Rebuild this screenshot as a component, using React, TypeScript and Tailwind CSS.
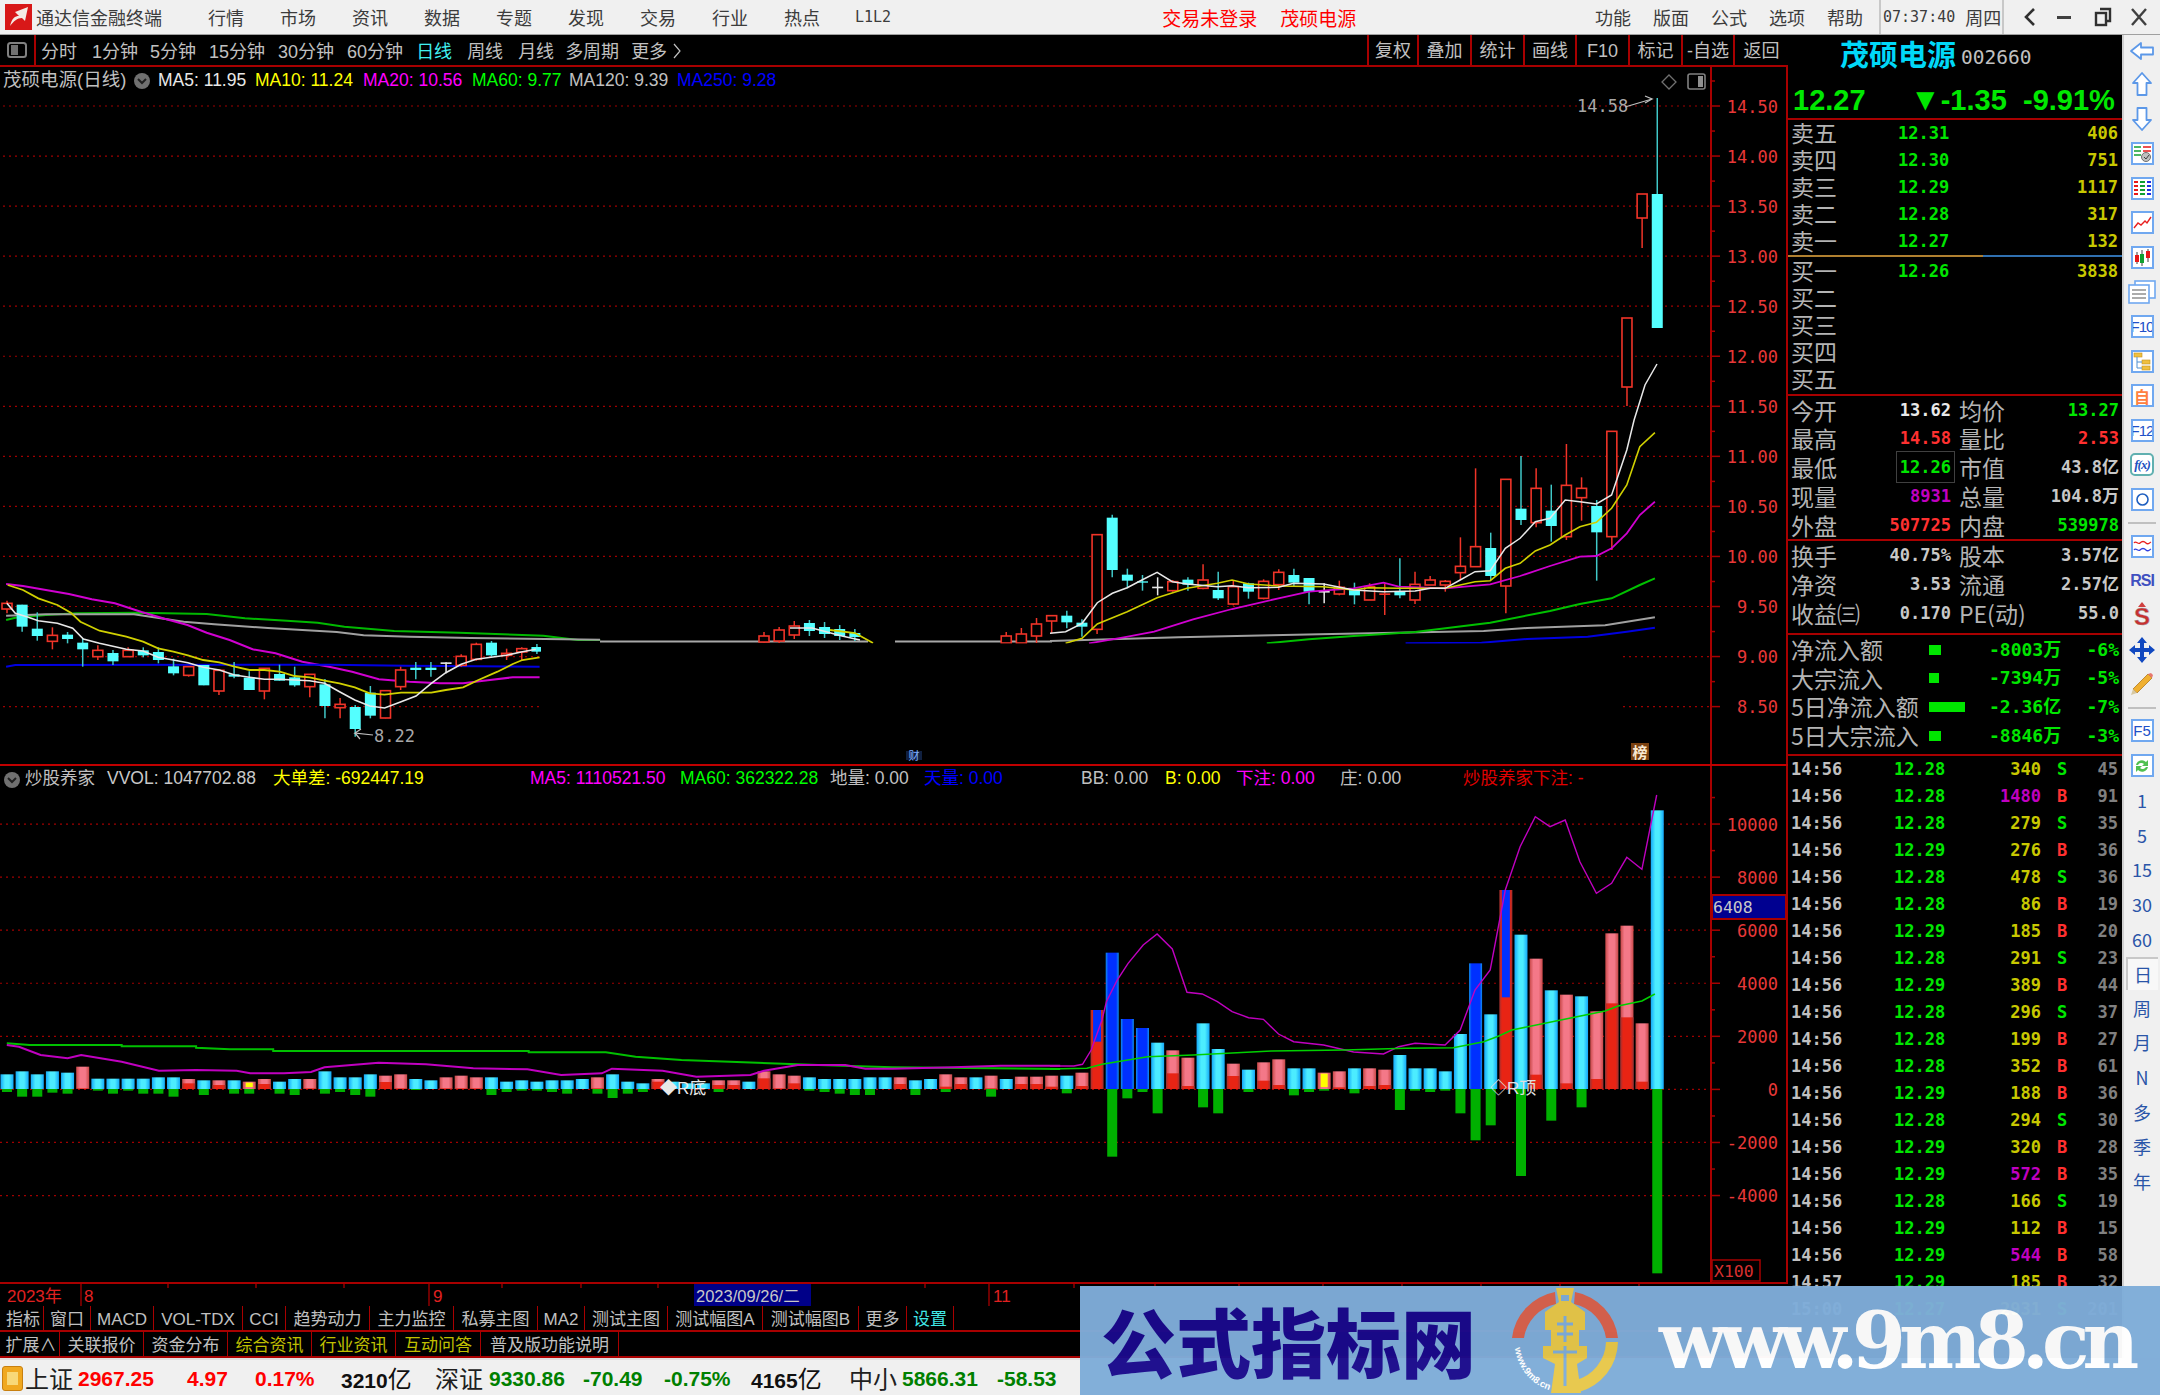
import React from "react";

type P = [number, number];
const SANS = "font-['Liberation_Sans','Noto_Sans_CJK_SC',sans-serif]";
const MONO = "font-['DejaVu_Sans_Mono','Noto_Sans_CJK_SC',monospace]";
const CJK = "font-['Noto_Sans_CJK_SC','Liberation_Sans',sans-serif]";
const FM = "'DejaVu Sans Mono','Noto Sans CJK SC',monospace";
const FS = "'Liberation Sans','Noto Sans CJK SC',sans-serif";

const ix = (i: number) => 7 + 15.14 * i;
const a = (pts: P[]) => pts.map(([x, y]) => `${(x / 2.613).toFixed(1)},${(570 + y / 3).toFixed(1)}`).join(" ");
const c = (pts: P[]) => pts.map(([x, y]) => `${(1050 + x / 2.306).toFixed(1)},${(420 + y / 3).toFixed(1)}`).join(" ");
const vl = (pts: P[]) => pts.map(([x, y]) => `${(x / 1.479).toFixed(1)},${(760 + y / 3).toFixed(1)}`).join(" ");
const vr = (pts: P[]) => pts.map(([x, y]) => `${(1050 + x / 2.306).toFixed(1)},${(780 + y / 3).toFixed(1)}`).join(" ");

type Cd = [number, number, number, number, number, string];
const ZA = (y: number) => 570 + y / 3;
const ZC = (y: number) => 420 + y / 3;
const candA: Cd[] = [
  [0,100,117,92,130,"r"],[1,104,170,104,185,"c"],[2,176,198,127,212,"c"],[3,196,214,172,238,"r"],[4,194,207,186,220,"c"],[5,218,238,205,290,"c"],[6,241,260,226,270,"r"],[7,249,274,240,285,"c"],[8,241,260,232,260,"r"],[9,241,256,232,262,"c"],[10,246,270,232,280,"c"],[11,289,310,266,316,"c"],[12,290,316,290,320,"r"],[13,285,346,285,346,"c"],[14,301,363,301,375,"r"],[15,313,320,276,325,"c"],[16,323,360,304,360,"c"],[17,295,363,295,388,"r"],[18,312,332,284,332,"c"],[19,322,346,290,350,"c"],[20,313,350,313,382,"r"],[21,343,408,327,445,"c"],[22,403,413,384,445,"r"],[23,411,477,405,500,"c"],[24,368,437,348,445,"c"],[25,362,444,362,445,"r"],[26,300,350,290,360,"r"],[27,293,300,276,328,"c"],[28,293,300,276,320,"c"],[29,277,279,277,310,"w"],[30,259,286,253,290,"r"],[31,223,268,218,272,"r"],[32,218,256,213,260,"c"],[33,250,256,236,270,"r"],[34,236,246,232,270,"r"],[35,231,245,222,252,"c"],
];
const candB: Cd[] = [
  [50,636,642,632,643,"r"],[51,630,641,627,643,"r"],[52,626,635,621,639,"r"],[53,623,631,620,636,"c"],[54,627,634,622,638,"c"],[55,629,636,625,640,"c"],[56,633,637,629,641,"c"],
  [66,636,643,632,643,"r"],[67,634,643,628,643,"r"],[68,624,636,618,643,"r"],
];
const candC: Cd[] = [
  [69,587,603,587,640,"r"],[70,587,607,572,625,"c"],[71,608,620,598,650,"c"],[72,344,628,344,642,"r"],[73,293,450,284,472,"c"],[74,464,482,446,505,"c"],[75,484,488,465,512,"c"],[76,500,502,472,526,"w"],[77,485,512,480,515,"r"],[78,479,494,472,512,"c"],[79,480,505,433,508,"r"],[80,510,535,455,540,"c"],[81,500,552,480,556,"r"],[82,490,515,488,536,"c"],[83,484,535,478,538,"r"],[84,457,494,448,510,"r"],[85,465,488,446,498,"c"],[86,474,515,474,553,"c"],[87,513,517,490,550,"w"],[88,502,522,482,526,"r"],[89,508,526,488,553,"c"],[90,500,540,490,540,"r"],[91,520,525,490,585,"s"],[92,515,526,415,535,"c"],[93,493,540,455,552,"r"],[94,480,495,468,495,"r"],[95,484,495,480,515,"r"],[96,439,458,352,480,"r"],[97,380,440,145,440,"r"],[98,384,468,338,480,"c"],[99,178,498,178,580,"r"],[100,266,300,108,315,"c"],[101,205,308,145,322,"r"],[102,272,318,194,365,"c"],[103,196,350,72,360,"r"],[104,205,233,172,302,"r"],[105,258,337,240,482,"c"],[106,34,350,34,390,"r"],
];
const candF: Cd[] = [
  [107,318,387,318,406,"r"],[108,194,218,194,248,"r"],[109,194,328,98,328,"c"],
];
const Candle = ({ d, f }: { d: Cd; f: (y: number) => number }) => {
  const [i, t, b, wt, wb, k] = d;
  const x = ix(i);
  const y1 = f(t), y2 = f(b), w1 = f(wt), w2 = f(wb);
  const col = k === "r" || k === "s" ? "#f03428" : k === "c" ? "#40c8c8" : "#e8e8e8";
  return (
    <g>
      <line x1={x} x2={x} y1={w1} y2={w2} stroke={col} strokeWidth={1.5} />
      {k === "r" && <rect x={x - 5} y={y1} width={10} height={y2 - y1} fill="#000" stroke="#f03428" strokeWidth={1.6} />}
      {k === "c" && <rect x={x - 5.5} y={y1} width={11} height={y2 - y1} fill="#54ffff" />}
      {k === "s" && <rect x={x - 5.5} y={y1} width={11} height={y2 - y1} fill="#f03428" />}
      {k === "w" && <rect x={x - 5.5} y={y1} width={11} height={1.6} fill="#e8e8e8" />}
    </g>
  );
};

const MainChart = () => {
  const levels = [14.5, 14, 13.5, 13, 12.5, 12, 11.5, 11, 10.5, 10, 9.5, 9, 8.5];
  const yp = (p: number) => 106 + (14.5 - p) * 100.1;
  return (
    <svg width={1788} height={697} viewBox="0 67 1788 697" className="block">
      {levels.map((p) => (
        <line key={p} x1={3} x2={1711} y1={yp(p)} y2={yp(p)} stroke="#a00000" strokeWidth={1.2} strokeDasharray="2 4" />
      ))}
      <polyline fill="none" stroke="#00b800" strokeWidth={2} points={a([[16,150],[40,143],[120,135],[200,130],[360,128],[540,132],[640,145],[750,152],[830,158],[900,170],[1030,183],[1200,188],[1420,197],[1510,210],[1568,210]])} />
      <polyline fill="none" stroke="#a0a0a0" strokeWidth={2} points={a([[16,137],[120,133],[350,133],[480,155],[560,163],[700,174],[790,180],[880,186],[950,196],[1070,200],[1230,204],[1568,209]])} />
      <polyline fill="none" stroke="#d000d0" strokeWidth={2} points={a([[16,42],[60,48],[120,60],[180,72],[240,88],[300,100],[370,126],[430,146],[490,165],[540,188],[600,210],[660,238],[720,250],[790,275],[860,290],[920,305],[990,328],[1070,335],[1150,340],[1210,340],[1280,330],[1340,322],[1410,322]])} />
      <polyline fill="none" stroke="#0000e0" strokeWidth={2} points={a([[16,290],[40,285],[860,284],[1060,287],[1410,290]])} />
      {candA.map((d) => <Candle key={d[0]} d={d} f={ZA} />)}
      <polyline fill="none" stroke="#d0d000" strokeWidth={1.8} points={a([[20,45],[60,60],[100,85],[150,105],[185,128],[210,155],[260,182],[330,200],[374,215],[413,235],[453,245],[491,256],[531,270],[573,277],[613,290],[652,300],[691,300],[731,305],[770,318],[809,322],[848,332],[887,340],[927,352],[966,370],[1005,374],[1048,368],[1127,368],[1165,360],[1210,352],[1250,330],[1300,305],[1340,282],[1365,270],[1410,262]])} />
      <polyline fill="none" stroke="#e8e8e8" strokeWidth={1.6} points={a([[18,100],[40,130],[70,140],[100,152],[150,160],[190,175],[218,207],[260,220],[330,238],[374,243],[413,262],[453,270],[491,278],[531,292],[573,300],[613,315],[652,322],[691,328],[731,328],[770,330],[809,332],[848,340],[887,365],[927,390],[966,408],[1005,414],[1048,395],[1087,378],[1127,340],[1165,308],[1205,283],[1244,268],[1283,262],[1323,256],[1362,246],[1400,238]])} />
      <line x1={600} x2={868} y1={641.5} y2={641.5} stroke="#a8a8a8" strokeWidth={2} />
      <line x1={895} x2={1052} y1={641.5} y2={641.5} stroke="#a8a8a8" strokeWidth={2} />
      {candB.map((d) => <Candle key={d[0]} d={d} f={(y) => y} />)}
      <polyline fill="none" stroke="#e8e8e8" strokeWidth={1.6} points="790,628 812,628 842,636 860,640" />
      <polyline fill="none" stroke="#d0d000" strokeWidth={1.8} points="830,630 855,633 873,643" />
      <polyline fill="none" stroke="#a0a0a0" strokeWidth={2} points={c([[0,663],[297,652],[510,646],[650,642],[1000,633],[1100,624],[1280,616],[1395,592]])} />
      <polyline fill="none" stroke="#00c000" strokeWidth={2} points={c([[500,670],[597,658],[700,648],[842,636],[1015,608],[1153,573],[1222,552],[1295,535],[1360,495],[1395,475]])} />
      <polyline fill="none" stroke="#0000e0" strokeWidth={2} points={c([[820,670],[995,668],[1100,657],[1240,650],[1330,635],[1395,623]])} />
      {candC.map((d) => <Candle key={d[0]} d={d} f={ZC} />)}
      {candF.map((d) => <Candle key={d[0]} d={d} f={(y) => y} />)}
      <polyline fill="none" stroke="#d000d0" strokeWidth={1.8} points={c([[90,670],[170,652],[240,635],[330,598],[420,567],[527,535],[597,515],[700,505],[769,488],[804,500],[911,505],[1015,493],[1084,468],[1153,438],[1222,410],[1260,408],[1295,385],[1330,340],[1360,285],[1395,245]])} />
      <polyline fill="none" stroke="#d0d000" strokeWidth={1.6} points={c([[36,670],[74,655],[109,612],[178,575],[247,533],[316,505],[386,490],[420,480],[458,492],[527,498],[631,500],[700,510],[735,503],[804,505],[911,505],[946,495],[980,485],[1015,482],[1050,445],[1084,430],[1119,393],[1153,375],[1188,345],[1222,320],[1260,307],[1295,265],[1330,195],[1360,80],[1395,38]])} />
      <polyline fill="none" stroke="#e8e8e8" strokeWidth={1.5} points={c([[0,640],[36,635],[74,610],[109,548],[144,520],[178,503],[212,480],[247,457],[282,485],[316,492],[386,500],[420,497],[458,503],[527,502],[562,490],[631,492],[700,510],[769,515],[842,513],[877,505],[911,505],[946,480],[980,455],[1015,452],[1050,385],[1084,355],[1119,305],[1153,295],[1188,240],[1222,245],[1260,252],[1295,225],[1330,90],[1347,0]]) + " 1645,385 1657,364"} />
      <rect x={541} y={643.5} width={1081} height={121} fill="#000" />
      <rect x={1710} y={67} width={2} height={697} fill="#a80000" />
      <rect x={1786} y={67} width={2} height={697} fill="#a80000" />
      {levels.map((p) => (
        <g key={p}>
          <line x1={1711} x2={1720} y1={yp(p)} y2={yp(p)} stroke="#a80000" strokeWidth={1.5} />
          <line x1={1711} x2={1715} y1={yp(p) - 25} y2={yp(p) - 25} stroke="#a80000" strokeWidth={1.5} />
          <text x={1778} y={yp(p) + 6.5} textAnchor="end" fontFamily={FM} fontSize={17} fill="#e83838">{p.toFixed(2)}</text>
        </g>
      ))}
      <text x={1577} y={112} fontFamily={FM} fontSize={17} fill="#a8a8a8">14.58</text>
      <polyline fill="none" stroke="#c0c0c0" strokeWidth={1.2} points="1625,107 1652,99 1645,96" />
      <polyline fill="none" stroke="#c0c0c0" strokeWidth={1.2} points="1652,99 1645,103" />
      <text x={374} y={742} fontFamily={FM} fontSize={17} fill="#a8a8a8">8.22</text>
      <polyline fill="none" stroke="#c0c0c0" strokeWidth={1.2} points="373,735 355,733 361,729" />
      <polyline fill="none" stroke="#c0c0c0" strokeWidth={1.2} points="355,733 360,739" />
      <polygon points="1669,75 1676,82 1669,89 1662,82" fill="none" stroke="#707070" strokeWidth={1.3} />
      <rect x={1688} y={74} width={17} height={15} rx={2} fill="none" stroke="#808080" strokeWidth={1.6} />
      <rect x={1698} y={76} width={5} height={11} fill="#909090" />
      <rect x={1631} y={743} width={18} height={17} fill="#7a4010" />
      <text x={1640} y={758} textAnchor="middle" fontFamily={FS} fontSize={15} fontWeight="bold" fill="#f8e8d0">榜</text>
      <rect x={906} y={751} width={16} height={9} fill="#102040" />
      <text x={914} y={760} textAnchor="middle" fontFamily={FS} fontSize={11} fill="#80b0ff">财</text>
    </svg>
  );
};

const leftTops = [943,934,943,934,938,920,956,956,956,956,952,952,957,961,961,961,965,957,965,957,957,934,952,952,943,947,943,957,961,952,947,952,952,965,961,965,961,961,957,952,943,965,970,957,965,970,970,961,961,965,934,943,947,952,957,957,957,952,952,952,961,957,943,952,952,947,957,950,950];
const leftNeg: Record<number, number> = {0:996,1:1010,2:1010,3:998,4:1001,6:992,7:1001,8:992,9:1001,10:1001,11:1010,13:1005,15:1001,16:1001,18:1001,19:1005,21:1001,22:996,23:1005,24:1010,27:990,32:1005,33:996,34:992,35:992,36:996,37:1001,39:1001,40:1014,41:1001,42:996,47:996,53:992,54:996,55:1001,56:1005,57:1005,60:1005,62:996,65:1010};
const leftPink: Record<number, number> = {5:985,12:970,14:975,17:972,20:985,25:966,26:985,29:985,30:985,31:985,39:985,43:965,47:975,48:975,50:955,51:985,52:970,59:972,62:980,63:972,65:985,67:972,68:972};
type VB = [number, string, number, number?, number?];
const rightBars: VB[] = [
  [69,"p",887,920],[70,"c",887,undefined,940],[71,"p",878,918],[72,"o",690,785],[73,"b",518,undefined,1130],[74,"b",717,undefined,955],[75,"b",744,undefined,936],[76,"c",788,undefined,1000],[77,"p",811,880],[78,"p",833,918],[79,"c",730,undefined,982],[80,"c",807,undefined,1000],[81,"p",851,888],[82,"c",869,undefined,936],[83,"p",847,902],[84,"p",838,915],[85,"c",865,undefined,946],[86,"c",865,undefined,936],[87,"y",878,undefined,932],[88,"p",874,922],[89,"c",865,undefined,940],[90,"p",865,918],[91,"p",869,915],[92,"c",825,undefined,990],[93,"c",865,undefined,932],[94,"c",865,undefined,936],[95,"c",874,undefined,932],[96,"c",762,undefined,1000],[97,"b",550,undefined,1081],[98,"c",703,undefined,1036],[99,"o",330,652],[100,"c",464,undefined,1188],[101,"p",536,884],[102,"c",631,undefined,1022],[103,"p",644,910],[104,"c",649,undefined,982],[105,"p",694,897],[106,"p",460,670],[107,"p",437,712],[108,"p",730,905],[109,"c",91,undefined,1480],
];
const BASE = 1089;
const Bar = ({ i, k, top, red, neg }: { i: number; k: string; top: number; red?: number; neg?: number }) => {
  const x = ix(i);
  const W = 13;
  return (
    <g>
      {neg !== undefined && <rect x={x - 5} y={BASE - 1} width={10} height={neg - BASE + 1} fill="#00b000" />}
      {k === "c" && <rect x={x - W / 2} y={top} width={W} height={BASE - top} fill="url(#gc)" />}
      {k === "b" && <rect x={x - W / 2} y={top} width={W} height={BASE - top} fill="url(#gb)" />}
      {k === "p" && <rect x={x - W / 2} y={top} width={W} height={BASE - top} fill="url(#gp)" />}
      {k === "p" && red !== undefined && <rect x={x - W / 2} y={red} width={W} height={BASE - red} fill="url(#gr)" />}
      {k === "o" && <rect x={x - W / 2} y={top} width={W} height={BASE - top} fill="url(#gr)" />}
      {k === "o" && red !== undefined && <rect x={x - 4} y={top} width={8} height={red - top} fill="#0030ff" />}
      {k === "y" && <rect x={x - W / 2} y={top} width={W} height={BASE - top} fill="url(#gp)" />}
      {k === "y" && <rect x={x - 3.5} y={top + 1} width={7} height={BASE - top - 3} fill="#ffff00" />}
    </g>
  );
};

const VolumeChart = () => {
  const vals = [10000, 8000, 6000, 4000, 2000, 0, -2000, -4000];
  const yv = (v: number) => 1089.4 - (v / 2000) * 53.07;
  return (
    <svg width={1788} height={516} viewBox="0 766 1788 516" className="block">
      <defs>
        <linearGradient id="gc" x1="0" x2="1" y1="0" y2="0"><stop offset="0" stopColor="#14a8f8" /><stop offset="0.35" stopColor="#4cecff" /><stop offset="0.65" stopColor="#4cecff" /><stop offset="1" stopColor="#14a8f8" /></linearGradient>
        <linearGradient id="gb" x1="0" x2="1" y1="0" y2="0"><stop offset="0" stopColor="#1090f0" /><stop offset="0.2" stopColor="#0030ff" /><stop offset="0.8" stopColor="#0030ff" /><stop offset="1" stopColor="#1090f0" /></linearGradient>
        <linearGradient id="gp" x1="0" x2="1" y1="0" y2="0"><stop offset="0" stopColor="#c84848" /><stop offset="0.3" stopColor="#f47888" /><stop offset="0.7" stopColor="#f47888" /><stop offset="1" stopColor="#c84848" /></linearGradient>
        <linearGradient id="gr" x1="0" x2="1" y1="0" y2="0"><stop offset="0" stopColor="#a03030" /><stop offset="0.2" stopColor="#e82414" /><stop offset="0.8" stopColor="#e82414" /><stop offset="1" stopColor="#a03030" /></linearGradient>
      </defs>
      {vals.map((v) => (
        <line key={v} x1={0} x2={1711} y1={yv(v)} y2={yv(v)} stroke="#a00000" strokeWidth={1.2} strokeDasharray="2 4" />
      ))}
      {leftTops.map((t, i) => {
        const top = 760 + t / 3;
        const k = i === 16 ? "y" : leftPink[i] !== undefined ? "p" : "c";
        const red = leftPink[i] !== undefined ? 760 + leftPink[i] / 3 : undefined;
        const neg = leftNeg[i] !== undefined ? 760 + leftNeg[i] / 3 : undefined;
        return <Bar key={i} i={i} k={k} top={top} red={red} neg={neg} />;
      })}
      {rightBars.map(([i, k, t, r, n]) => (
        <Bar key={i} i={i} k={k} top={780 + t / 3} red={r !== undefined ? 780 + r / 3 : undefined} neg={n !== undefined ? 780 + n / 3 : undefined} />
      ))}
      <polyline fill="none" stroke="#00c000" strokeWidth={2} points={vl([[10,850],[44,855],[180,855],[180,859],[290,859],[290,863],[340,868],[404,868],[404,873],[782,873],[782,877],[896,877],[940,890],[1008,900],[1120,908],[1210,915],[1320,922],[1568,927]])} />
      <polyline fill="none" stroke="#c000c0" strokeWidth={2} points={vl([[10,855],[28,860],[60,885],[100,895],[120,885],[180,905],[235,932],[290,930],[350,932],[370,940],[420,940],[460,936],[480,922],[560,908],[630,913],[700,925],[780,928],[830,945],[890,940],[905,926],[980,932],[1030,950],[1110,945],[1130,932],[1180,915],[1250,915],[1280,926],[1320,926],[1410,922],[1480,917],[1568,917]])} />
      <polyline fill="none" stroke="#c000c0" strokeWidth={1.4} points={vr([[0,858],[55,858],[75,853],[95,810],[120,720],[130,665],[155,600],[180,550],[215,495],[247,462],[282,507],[316,637],[351,642],[386,665],[420,695],[458,713],[492,718],[527,762],[562,785],[631,795],[700,816],[769,822],[804,800],[842,790],[911,795],[946,750],[980,630],[1015,570],[1050,330],[1084,200],[1119,110],[1153,140],[1188,120],[1222,245],[1260,340],[1295,310],[1330,232],[1365,268],[1399,45]])} />
      <polyline fill="none" stroke="#00d000" strokeWidth={1.6} points={vr([[0,867],[85,865],[120,853],[190,838],[225,830],[330,825],[510,813],[680,810],[820,805],[930,803],[1000,785],[1035,768],[1065,750],[1280,693],[1310,678],[1365,663],[1395,642]])} />
      <text x={660} y={1094} fontFamily={FS} fontSize={17} fill="#e8e8e8">◆R底</text>
      <text x={1490} y={1094} fontFamily={FS} fontSize={17} fill="#e0e0e0">◇R顶</text>
      <rect x={1710} y={766} width={2} height={516} fill="#a80000" />
      <rect x={1786} y={766} width={2} height={516} fill="#a80000" />
      {vals.map((v) => (
        <g key={v}>
          <line x1={1711} x2={1720} y1={yv(v)} y2={yv(v)} stroke="#a80000" strokeWidth={1.5} />
          <line x1={1711} x2={1715} y1={yv(v) - 26.5} y2={yv(v) - 26.5} stroke="#a80000" strokeWidth={1.5} />
          <text x={1778} y={yv(v) + 6.5} textAnchor="end" fontFamily={FM} fontSize={17} fill="#e83838">{v}</text>
        </g>
      ))}
      <rect x={1712} y={895} width={74} height={24} fill="#000090" stroke="#a80000" strokeWidth={2} />
      <text x={1713} y={913} fontFamily={FM} fontSize={16.5} fill="#c8c8c8">6408</text>
      <rect x={1712} y={1260} width={48} height={21} fill="#000" stroke="#a80000" strokeWidth={1.5} />
      <text x={1714} y={1277} fontFamily={FM} fontSize={16.5} fill="#d83030">X100</text>
    </svg>
  );
};

const TimeAxis = () => (
  <div className="h-[24px] border-t-2 border-[#a80000] overflow-hidden">
    <svg width={1788} height={22} viewBox="0 1284 1788 22" className="block">
      {[168, 256, 344, 502, 581, 658, 925, 1074, 1155, 1239, 1323, 1402, 1481, 1560, 1639].map((x) => (
        <line key={x} x1={x} x2={x} y1={1284} y2={1288} stroke="#a80000" strokeWidth={1.3} />
      ))}
      {[81, 429, 989].map((x) => (
        <line key={x} x1={x} x2={x} y1={1284} y2={1306} stroke="#a80000" strokeWidth={1.3} />
      ))}
      <text x={7} y={1302} fontFamily={FS} fontSize={17} fill="#e02020">2023年</text>
      <text x={84} y={1302} fontFamily={FS} fontSize={17} fill="#e02020">8</text>
      <text x={433} y={1302} fontFamily={FS} fontSize={17} fill="#e02020">9</text>
      <text x={993} y={1302} fontFamily={FS} fontSize={17} fill="#e02020">11</text>
      <rect x={694} y={1284} width={117} height={22} fill="#000088" />
      <text x={696} y={1302} fontFamily={FS} fontSize={16.5} fill="#c8c8c8">2023/09/26/二</text>
    </svg>
  </div>
);

const tabs1: [string, string, string][] = [
  ["指标", "w-[41px]", "text-[#c0c0c0]"],["窗口", "w-[47px]", "text-[#c0c0c0]"],["MACD", "w-[63px]", "text-[#c0c0c0]"],["VOL-TDX", "w-[89px]", "text-[#c0c0c0]"],["CCI", "w-[43px]", "text-[#c0c0c0]"],["趋势动力", "w-[84px]", "text-[#c0c0c0]"],["主力监控", "w-[84px]", "text-[#c0c0c0]"],["私募主图", "w-[84px]", "text-[#c0c0c0]"],["MA2", "w-[47px]", "text-[#c0c0c0]"],["测试主图", "w-[83px]", "text-[#c0c0c0]"],["测试幅图A", "w-[95px]", "text-[#c0c0c0]"],["测试幅图B", "w-[96px]", "text-[#c0c0c0]"],["更多", "w-[48px]", "text-[#c0c0c0]"],["设置", "w-[47px]", "text-[#40e8e8]"],
];
const tabs2: [string, string, string][] = [
  ["扩展∧", "w-[57px]", "text-[#c0c0c0]"],["关联报价", "w-[84px]", "text-[#c0c0c0]"],["资金分布", "w-[84px]", "text-[#c0c0c0]"],["综合资讯", "w-[84px]", "text-[#c0c000]"],["行业资讯", "w-[84px]", "text-[#c0c000]"],["互动问答", "w-[85px]", "text-[#c0c000]"],["普及版功能说明", "w-[138px]", "text-[#c0c0c0]"],
];
const TabRow = ({ items }: { items: [string, string, string][] }) => (
  <div className="h-[26px] flex border-b-2 border-[#a80000] pl-[3px]">
    {items.map(([t, w, col]) => (
      <div key={t} className={`${w} ${col} border-r border-[#a80000] flex items-center justify-center pt-[3px] text-[17px] leading-none whitespace-nowrap`}>{t}</div>
    ))}
  </div>
);

const Legend = ({ x, color, children }: { x: string; color: string; children: React.ReactNode }) => (
  <span className={`absolute ${x} ${color} text-[17.5px] leading-none whitespace-nowrap`}>{children}</span>
);

const Toolbar = () => {
  const items: [string, string, string][] = [
    ["分时", "ml-[5px]", "text-[#c0c0c0]"],["1分钟", "ml-[15px]", "text-[#c0c0c0]"],["5分钟", "ml-[12px]", "text-[#c0c0c0]"],["15分钟", "ml-[13px]", "text-[#c0c0c0]"],["30分钟", "ml-[13px]", "text-[#c0c0c0]"],["60分钟", "ml-[13px]", "text-[#c0c0c0]"],["日线", "ml-[13px]", "text-[#40f0f0]"],["周线", "ml-[15px]", "text-[#c0c0c0]"],["月线", "ml-[15px]", "text-[#c0c0c0]"],["多周期", "ml-[11px]", "text-[#c0c0c0]"],["更多", "ml-[12px]", "text-[#c0c0c0]"],
  ];
  const right: [string, string][] = [["复权","w-[50px]"],["叠加","w-[53px]"],["统计","w-[53px]"],["画线","w-[52px]"],["F10","w-[53px]"],["标记","w-[53px]"],["-自选","w-[52px]"],["返回","w-[55px]"]];
  return (
    <div className="h-[32px] flex items-stretch border-b-2 border-[#a80000] text-[18px] leading-none">
      <div className="w-[36px] border-r-2 border-[#a80000] flex items-center justify-center">
        <svg width="20" height="16" viewBox="0 0 20 16"><rect x="1" y="1" width="18" height="14" rx="2.5" fill="none" stroke="#808080" strokeWidth="2" /><rect x="4" y="3" width="7" height="10" fill="#707070" /></svg>
      </div>
      {items.map(([t, m, col]) => (
        <div key={t} className={`${m} ${col} flex items-center pt-[3px] whitespace-nowrap`}>{t}</div>
      ))}
      <div className="flex items-center ml-[6px] pt-[2px]">
        <svg width="9" height="16" viewBox="0 0 9 16"><polyline points="1,1 7,8 1,15" fill="none" stroke="#c0c0c0" strokeWidth="1.2" /></svg>
      </div>
      <div className="ml-auto flex">
        {right.map(([t, w]) => (
          <div key={t} className={`${w} border-l-2 border-[#a80000] text-[#c0c0c0] flex items-center justify-center pt-[2px] whitespace-nowrap`}>{t}</div>
        ))}
      </div>
    </div>
  );
};

const Left = () => (
  <div className="w-[1788px] flex flex-col shrink-0">
    <Toolbar />
    <div className="relative h-[697px]">
      <MainChart />
      <div className="absolute left-[3px] top-[4px] text-[#c0c0c0] text-[18.5px] leading-none whitespace-nowrap">茂硕电源(日线)</div>
      <div className="absolute left-[134px] top-[6px] w-[16px] h-[16px] rounded-full bg-[#707070] flex items-center justify-center">
        <svg width="10" height="7" viewBox="0 0 10 7"><polyline points="1,1 5,5 9,1" fill="none" stroke="#202020" strokeWidth="2" /></svg>
      </div>
      <Legend x="left-[158px] top-[5px]" color="text-[#e8e8e8]">MA5: 11.95</Legend>
      <Legend x="left-[255px] top-[5px]" color="text-[#ffff00]">MA10: 11.24</Legend>
      <Legend x="left-[363px] top-[5px]" color="text-[#ff00ff]">MA20: 10.56</Legend>
      <Legend x="left-[472px] top-[5px]" color="text-[#00ff00]">MA60: 9.77</Legend>
      <Legend x="left-[569px] top-[5px]" color="text-[#c0c0c0]">MA120: 9.39</Legend>
      <Legend x="left-[677px] top-[5px]" color="text-[#0000ff]">MA250: 9.28</Legend>
    </div>
    <div className="relative h-[518px] border-t-2 border-[#c00000]">
      <VolumeChart />
      <div className="absolute left-[4px] top-[6px] w-[16px] h-[16px] rounded-full bg-[#707070] flex items-center justify-center">
        <svg width="10" height="7" viewBox="0 0 10 7"><polyline points="1,1 5,5 9,1" fill="none" stroke="#202020" strokeWidth="2" /></svg>
      </div>
      <Legend x="left-[25px] top-[4px]" color="text-[#c0c0c0]">炒股养家</Legend>
      <Legend x="left-[107px] top-[4px]" color="text-[#c8c8c8]">VVOL: 1047702.88</Legend>
      <Legend x="left-[273px] top-[4px]" color="text-[#ffff00]">大单差: -692447.19</Legend>
      <Legend x="left-[530px] top-[4px]" color="text-[#ff00ff]">MA5: 1110521.50</Legend>
      <Legend x="left-[680px] top-[4px]" color="text-[#00ff00]">MA60: 362322.28</Legend>
      <Legend x="left-[830px] top-[4px]" color="text-[#c0c0c0]">地量: 0.00</Legend>
      <Legend x="left-[924px] top-[4px]" color="text-[#0000ff]">天量: 0.00</Legend>
      <Legend x="left-[1081px] top-[4px]" color="text-[#c0c0c0]">BB: 0.00</Legend>
      <Legend x="left-[1165px] top-[4px]" color="text-[#ffff00]">B: 0.00</Legend>
      <Legend x="left-[1236px] top-[4px]" color="text-[#ff00ff]">下注: 0.00</Legend>
      <Legend x="left-[1340px] top-[4px]" color="text-[#c0c0c0]">庄: 0.00</Legend>
      <Legend x="left-[1463px] top-[4px]" color="text-[#e00000]">炒股养家下注: -</Legend>
    </div>
    <TimeAxis />
    <TabRow items={tabs1} />
    <TabRow items={tabs2} />
  </div>
);

const GREEN = "text-[#00e600]";
const YEL = "text-[#c8c800]";
const book: [string, string, string][] = [["卖五","12.31","406"],["卖四","12.30","751"],["卖三","12.29","1117"],["卖二","12.28","317"],["卖一","12.27","132"]];
const book2: [string, string, string][] = [["买一","12.26","3838"],["买二","",""],["买三","",""],["买四","",""],["买五","",""]];
const BookRow = ({ r }: { r: [string, string, string] }) => (
  <div className="h-[27.1px] flex items-center">
    <span className={`w-[110px] pl-[3px] pb-[2px] text-[23px] leading-none text-[#b4b4b4] ${CJK}`}>{r[0]}</span>
    <span className={`w-[60px] ${GREEN} font-bold text-[17px] leading-none`}>{r[1]}</span>
    <span className={`flex-1 text-right pr-[4px] ${YEL} font-bold text-[17px] leading-none`}>{r[2]}</span>
  </div>
);
const Stat = ({ l, v, vc = "text-[#c8c8c8]", l2, v2, v2c = "text-[#c8c8c8]", box }: { l: string; v: string; vc?: string; l2: string; v2: string; v2c?: string; box?: boolean }) => (
  <div className="h-[28.7px] flex items-center whitespace-nowrap">
    <span className={`w-[90px] pl-[3px] text-[23px] leading-none text-[#b4b4b4] ${CJK} whitespace-nowrap`}>{l}</span>
    <span className={`w-[73px] text-right ${vc} font-bold text-[17px] leading-none`}>
      {box ? <span className="outline outline-1 outline-[#404040] px-[3px] py-[5px] mr-[-3px]">{v}</span> : v}
    </span>
    <span className={`w-[70px] ml-[8px] text-[23px] leading-none text-[#b4b4b4] ${CJK} whitespace-nowrap`}>{l2}</span>
    <span className={`flex-1 text-right pr-[3px] ${v2c} font-bold text-[17px] leading-none`}>{v2}</span>
  </div>
);
const Flow = ({ l, w, v, p }: { l: string; w: string; v: React.ReactNode; p: string }) => (
  <div className="h-[28.6px] flex items-center whitespace-nowrap">
    <span className={`w-[141px] pl-[3px] text-[23px] leading-none text-[#b4b4b4] ${CJK} whitespace-nowrap`}>{l}</span>
    <span className="w-[60px]"><span className={`block ${w} h-[10px] bg-[#00e600]`} /></span>
    <span className={`w-[68px] text-right ${GREEN} text-[18px] font-bold leading-none`}>{v}</span>
    <span className={`flex-1 text-right pr-[3px] ${GREEN} text-[18px] font-bold leading-none`}>{p}</span>
  </div>
);

const ticks: [string, string, string, string, string][] = [
  ["14:56","12.28","340","S","45"],["14:56","12.28","1480","B","91"],["14:56","12.28","279","S","35"],["14:56","12.29","276","B","36"],["14:56","12.28","478","S","36"],["14:56","12.28","86","B","19"],["14:56","12.29","185","B","20"],["14:56","12.28","291","S","23"],["14:56","12.29","389","B","44"],["14:56","12.28","296","S","37"],["14:56","12.28","199","B","27"],["14:56","12.28","352","B","61"],["14:56","12.29","188","B","36"],["14:56","12.28","294","S","30"],["14:56","12.29","320","B","28"],["14:56","12.29","572","B","35"],["14:56","12.28","166","S","19"],["14:56","12.29","112","B","15"],["14:56","12.29","544","B","58"],["14:57","12.29","185","B","32"],["15:00","12.27","2931","S","201"],
];
const Right = () => (
  <div className={`w-[334px] shrink-0 flex flex-col ${MONO}`}>
    <div className="h-[85px] border-b-2 border-[#a80000] relative">
      <div className={`absolute left-[52px] top-[2px] text-[#00d8f8] text-[29px] leading-[32px] font-bold ${CJK}`}>茂硕电源</div>
      <div className="absolute left-[173px] top-[13px] text-[#c0c0c0] text-[19.5px] leading-none">002660</div>
      <div className={`absolute left-[5px] top-[49px] flex items-baseline text-[#00e800] font-bold text-[29px] leading-none ${SANS}`}>
        <span className="w-[120px]">12.27</span>
        <span className="w-[110px] whitespace-nowrap"><span className="text-[31px] ml-[-3px]">▼</span>-1.35</span>
        <span className="whitespace-nowrap">-9.91%</span>
      </div>
    </div>
    <div>
      {book.map((r) => <BookRow key={r[0]} r={r} />)}
      <div className="h-[2px] flex"><div className="w-[195px] bg-[#b08030]" /><div className="flex-1 bg-[#3070b0]" /></div>
      {book2.map((r) => <BookRow key={r[0]} r={r} />)}
    </div>
    <div className="border-t-2 border-[#a80000] mt-[1px]">
      <Stat l="今开" v="13.62" vc="text-[#e8e8e8]" l2="均价" v2="13.27" v2c={GREEN} />
      <Stat l="最高" v="14.58" vc="text-[#ff3030]" l2="量比" v2="2.53" v2c="text-[#ff3030]" />
      <Stat l="最低" v="12.26" vc={GREEN} box l2="市值" v2="43.8亿" />
      <Stat l="现量" v="8931" vc="text-[#c000c0]" l2="总量" v2="104.8万" />
      <Stat l="外盘" v="507725" vc="text-[#ff3030]" l2="内盘" v2="539978" v2c={GREEN} />
    </div>
    <div className="border-t-2 border-[#a80000] pb-[6px]">
      <Stat l="换手" v="40.75%" l2="股本" v2="3.57亿" />
      <Stat l="净资" v="3.53" l2="流通" v2="2.57亿" />
      <Stat l="收益㈢" v="0.170" l2="PE(动)" v2="55.0" />
    </div>
    <div className="border-t-2 border-[#a80000] pb-[4px]">
      <Flow l="净流入额" w="w-[12px]" v="-8003万" p="-6%" />
      <Flow l="大宗流入" w="w-[10px]" v="-7394万" p="-5%" />
      <Flow l="5日净流入额" w="w-[36px]" v="-2.36亿" p="-7%" />
      <Flow l="5日大宗流入" w="w-[12px]" v="-8846万" p="-3%" />
    </div>
    <div className="border-t-2 border-[#a80000] flex-1 overflow-hidden">
      {ticks.map((r, i) => {
        const big = r[2] === "1480" || r[2] === "572" || r[2] === "544";
        return (
          <div key={i} className="h-[27px] flex items-center font-bold text-[17px] leading-none">
            <span className="w-[106px] pl-[3px] text-[#c0c0c0]">{r[0]}</span>
            <span className={`w-[60px] ${GREEN}`}>{r[1]}</span>
            <span className={`w-[87px] text-right ${big ? "text-[#c000c0]" : YEL}`}>{r[2]}</span>
            <span className={`w-[30px] pl-[16px] ${r[3] === "S" ? GREEN : "text-[#ff3030]"}`}>{r[3]}</span>
            <span className="w-[47px] text-right text-[#808080]">{r[4]}</span>
          </div>
        );
      })}
    </div>
  </div>
);

const Box = ({ children }: { children: React.ReactNode }) => (
  <div className="w-[23px] h-[23px] bg-white border-2 border-[#70a8f0] flex items-center justify-center overflow-hidden text-[#2060c8]">{children}</div>
);
const Cell = ({ children }: { children: React.ReactNode }) => (
  <div className="h-[34.6px] flex items-center justify-center shrink-0">{children}</div>
);
const Arrow = ({ d, v }: { d: string; v: string }) => (
  <svg width="26" height="26" viewBox={v}><path d={d} fill="#fff" stroke="#5c98e8" strokeWidth="1.8" strokeLinejoin="round" /></svg>
);
const RailText = ({ t }: { t: string }) => <Cell><span className={`text-[#2a55a8] text-[18px] leading-none ${CJK}`}>{t}</span></Cell>;
const Rail = () => (
  <div className="flex-1 bg-[#f0f0f0] border-l-2 border-[#d0d0d0] flex flex-col items-stretch">
    <div className="h-[32px] flex items-center justify-center"><Arrow v="0 0 26 26" d="M2 13 L12 5 V9.5 H24 V16.5 H12 V21 Z" /></div>
    <Cell><Arrow v="0 0 26 26" d="M13 2 L22 12 H17.5 V24 H8.5 V12 H4 Z" /></Cell>
    <Cell><Arrow v="0 0 26 26" d="M13 24 L22 14 H17.5 V2 H8.5 V14 H4 Z" /></Cell>
    <Cell><Box><svg width="19" height="19" viewBox="0 0 19 19"><g strokeWidth="1.5"><path d="M1 3H8M1 7H8M1 11H8" stroke="#10a030" /><path d="M10 3H18M10 7H18" stroke="#e81818" /></g><circle cx="13" cy="13" r="4.5" fill="#c0c0c0" stroke="#707070" /><path d="M11 13l2 2 3-4" stroke="#404040" fill="none" /></svg></Box></Cell>
    <Cell><Box><svg width="19" height="19" viewBox="0 0 19 19"><g strokeWidth="2"><path d="M1 3H5M1 7H5M1 11H5M1 15H5" stroke="#e81818" /><path d="M7 3H12M7 7H12M7 11H12M7 15H12" stroke="#10a030" /><path d="M14 3H18M14 7H18M14 11H18M14 15H18" stroke="#2030e0" /></g></svg></Box></Cell>
    <Cell><Box><svg width="19" height="19" viewBox="0 0 19 19"><polyline points="1,15 5,10 8,12 12,8 14,10 18,4" fill="none" stroke="#e82020" strokeWidth="1.4" /></svg></Box></Cell>
    <Cell><Box><svg width="19" height="19" viewBox="0 0 19 19"><path d="M4 4V16M9 2V18M15 1V14" stroke="#404040" /><rect x="2" y="7" width="4" height="7" fill="#e81818" /><rect x="7" y="6" width="4" height="9" fill="#10a030" /><rect x="13" y="3" width="4" height="7" fill="#e81818" /></svg></Box></Cell>
    <Cell><svg width="28" height="24" viewBox="0 0 28 24"><rect x="7" y="1" width="20" height="17" fill="#fff" stroke="#70a8f0" strokeWidth="1.6" /><rect x="1" y="5" width="20" height="18" fill="#fff" stroke="#70a8f0" strokeWidth="1.6" /><path d="M4 10H18M4 14H18M4 18H18" stroke="#909090" strokeWidth="1.6" /></svg></Cell>
    <Cell><Box><span className="text-[15px] leading-none font-['Liberation_Sans'] tracking-[-1px] text-[#2050c8]">F10</span></Box></Cell>
    <Cell><Box><svg width="19" height="19" viewBox="0 0 19 19"><rect x="1" y="1" width="8" height="4" fill="#f0c040" stroke="#c09020" strokeWidth=".6" /><rect x="9" y="8" width="8" height="4" fill="#f0c040" stroke="#c09020" strokeWidth=".6" /><rect x="9" y="14" width="8" height="4" fill="#f0c040" stroke="#c09020" strokeWidth=".6" /><path d="M4 5V16H9M4 10H9" stroke="#5090d0" fill="none" /></svg></Box></Cell>
    <Cell><Box><span className={`text-[16px] leading-none font-bold text-[#ff8040] ${CJK}`}>自</span></Box></Cell>
    <Cell><Box><span className="text-[15px] leading-none font-['Liberation_Sans'] tracking-[-1px] text-[#2050c8]">F12</span></Box></Cell>
    <Cell><div className="w-[24px] h-[23px] bg-white border-2 border-[#60b0b0] rounded-[5px] flex items-center justify-center"><span className="text-[13px] leading-none italic font-bold font-['Liberation_Serif'] tracking-[-1px] text-[#2050c0]">f(x)</span></div></Cell>
    <Cell><Box><svg width="17" height="17" viewBox="0 0 17 17"><circle cx="8.5" cy="8.5" r="5.5" fill="none" stroke="#2060c0" strokeWidth="1.6" /></svg></Box></Cell>
    <div className="h-[12px] flex items-center justify-center"><div className="w-[28px] h-[2px] bg-[#c0c0c0]" /></div>
    <Cell><Box><svg width="19" height="19" viewBox="0 0 19 19"><path d="M1 6c2-3 4 2 6 0s4-2 6 0 3 0 5-1" stroke="#e82020" fill="none" strokeWidth="1.3" /><path d="M1 13c2-3 4 2 6 0s4-2 6 0 3 0 5-1" stroke="#3040e0" fill="none" strokeWidth="1.3" /></svg></Box></Cell>
    <Cell><span className="text-[16px] leading-none font-bold font-['Liberation_Sans'] text-[#4050c0] tracking-[-1px]">RSI</span></Cell>
    <Cell><svg width="24" height="28" viewBox="0 0 24 28"><path d="M12 1L16 6H8Z" fill="#d04040" /><text x="12" y="24" textAnchor="middle" fontFamily={FS} fontSize="24" fontWeight="bold" fill="#c83030" stroke="#a0a0a0" strokeWidth=".4">S</text></svg></Cell>
    <Cell><svg width="28" height="28" viewBox="0 0 28 28"><path d="M14 1L19 7H16V12H21V9L27 14 21 19V16H16V21H19L14 27 9 21H12V16H7V19L1 14 7 9V12H12V7H9Z" fill="#1048c0" /></svg></Cell>
    <Cell><svg width="26" height="26" viewBox="0 0 26 26"><path d="M4 18L19 3l4 4L8 22Z" fill="#f0b030" stroke="#b07820" strokeWidth=".8" /><path d="M4 18l4 4-6 2Z" fill="#d8c8a0" /><path d="M19 3l4 4 1-3-2-2Z" fill="#e87870" /></svg></Cell>
    <div className="h-[12px] flex items-center justify-center"><div className="w-[28px] h-[2px] bg-[#c0c0c0]" /></div>
    <Cell><Box><span className="text-[15px] leading-none font-['Liberation_Sans'] text-[#2050c8]">F5</span></Box></Cell>
    <Cell><Box><svg width="18" height="18" viewBox="0 0 18 18"><path d="M3 8a6 6 0 0 1 10-3l2-2v6h-6l2-2a4 4 0 0 0-6 1Z" fill="#50c050" /><path d="M15 10a6 6 0 0 1-10 3l-2 2V9h6l-2 2a4 4 0 0 0 6-1Z" fill="#50c050" /></svg></Box></Cell>
    {["1", "5", "15", "30", "60"].map((t) => <RailText key={t} t={t} />)}
    <Cell><div className="w-[32px] h-[33px] bg-[#f8f8f8] border-l-2 border-t-2 border-[#c8c8c8] flex items-center justify-center"><span className={`text-[#2a55a8] text-[18px] leading-none ${CJK}`}>日</span></div></Cell>
    {["周", "月", "N", "多", "季", "年"].map((t) => <RailText key={t} t={t} />)}
  </div>
);

const menus = ["行情","市场","资讯","数据","专题","发现","交易","行业","热点"];
const TitleBar = () => (
  <div className={`h-[35px] bg-[#f0f0f0] border-b border-[#a0a0a0] flex items-center text-[#3c3c3c] text-[18px] leading-none shrink-0 relative whitespace-nowrap ${CJK}`}>
    <div className="w-[36px] flex justify-center">
      <svg width="27" height="26" viewBox="0 0 27 26"><rect width="27" height="26" fill="#d81818" /><path d="M5 22 C7 14 10 12 14 12 L10 8 L23 3 L20 17 L17 14 C12 14 9 17 5 22 Z" fill="#f4ece4" /></svg>
    </div>
    <span className="w-[172px]">通达信金融终端</span>
    <div className="flex gap-[36px]">{menus.map((m) => <span key={m}>{m}</span>)}</div>
    <span className={`ml-[35px] ${MONO} text-[15px]`}>L1L2</span>
    <span className="ml-[271px] text-[#ff0000] text-[19px]">交易未登录</span>
    <span className="ml-[23px] text-[#ff0000] text-[19px]">茂硕电源</span>
    <div className="ml-auto flex items-center h-full">
      <div className="flex gap-[22px] mr-[16px]">{["功能","版面","公式","选项","帮助"].map((m) => <span key={m}>{m}</span>)}</div>
      <div className="h-full border-l-2 border-r-2 border-[#c8c8c8] flex items-center gap-[10px] pl-[2px] w-[125px]">
        <span className={`${MONO} text-[15px]`}>07:37:40</span>
        <span className="text-[18px]">周四</span>
      </div>
      <div className="flex items-center w-[156px]">
        <svg className="ml-[19px]" width="14" height="20" viewBox="0 0 14 20"><polyline points="11,2 3,10 11,18" fill="none" stroke="#303030" strokeWidth="2.6" /></svg>
        <svg className="ml-[20px]" width="14" height="20" viewBox="0 0 14 20"><rect x="0" y="9" width="14" height="3" fill="#404040" /></svg>
        <svg className="ml-[23px]" width="18" height="20" viewBox="0 0 18 20"><path d="M6 2H16V14H12" fill="none" stroke="#303030" strokeWidth="2.4" /><rect x="2" y="6" width="10" height="12" fill="none" stroke="#303030" strokeWidth="2.4" /></svg>
        <svg className="ml-[18px]" width="18" height="20" viewBox="0 0 18 20"><path d="M2 2L16 18M16 2L2 18" stroke="#404040" strokeWidth="2.4" /></svg>
      </div>
    </div>
  </div>
);

const StatusBar = () => (
  <div className={`h-[37px] shrink-0 bg-[#f0f0f0] border-t-2 border-[#e0e0e0] flex items-center pt-[1px] text-[21px] leading-none whitespace-nowrap font-semibold ${SANS}`}>
    <div className="ml-[2px] w-[21px] h-[25px] rounded-[3px] bg-[#f0a820] border border-[#c88010] flex items-center justify-center"><div className="w-[11px] h-[13px] bg-[#f8d878]" /></div>
    <span className={`ml-[2px] text-[24px] font-normal text-[#202020] ${CJK}`}>上证</span>
    <span className="ml-[5px] text-[#ff0000] w-[77px]">2967.25</span>
    <span className="ml-[32px] text-[#ff0000] w-[39px]">4.97</span>
    <span className="ml-[29px] text-[#ff0000] w-[58px]">0.17%</span>
    <span className="ml-[28px] text-[#101010] w-[70px]">3210<span className={`text-[24px] font-normal ${CJK}`}>亿</span></span>
    <span className={`ml-[24px] text-[24px] font-normal text-[#202020] ${CJK}`}>深证</span>
    <span className="ml-[6px] text-[#008000] w-[76px]">9330.86</span>
    <span className="ml-[18px] text-[#008000] w-[60px]">-70.49</span>
    <span className="ml-[21px] text-[#008000] w-[66px]">-0.75%</span>
    <span className="ml-[21px] text-[#101010] w-[70px]">4165<span className={`text-[24px] font-normal ${CJK}`}>亿</span></span>
    <span className={`ml-[28px] text-[24px] font-normal text-[#202020] ${CJK}`}>中小</span>
    <span className="ml-[5px] text-[#008000] w-[76px]">5866.31</span>
    <span className="ml-[19px] text-[#008000] w-[58px]">-58.53</span>
  </div>
);

const Watermark = () => (
  <div className="absolute left-[1080px] top-[1286px] w-[1080px] h-[109px] bg-[#7fadd9] opacity-[0.97] flex items-center overflow-hidden">
    <div className={`ml-[21px] w-[378px] pb-[3px] text-[75px] leading-none font-black text-[#1a0a8c] whitespace-nowrap ${CJK}`}>公式指标网</div>
    <svg className="ml-[28px] shrink-0" width="116" height="109" viewBox="0 0 116 109">
      <path d="M5 52 A53 53 0 0 1 48 6 L49 18 A41 41 0 0 0 17 52 Z" fill="#d9634e" />
      <path d="M111 52 A53 53 0 0 0 68 6 L67 18 A41 41 0 0 1 99 52 Z" fill="#d9634e" />
      <path d="M111 56 A53 53 0 0 1 72 106 L69 94 A41 41 0 0 0 99 56 Z" fill="#e8c84a" />
      <path d="M49 2 H67 L64 16 L78 26 L78 44 H72 V60 H80 V72 L70 78 L74 107 H44 L48 78 L36 72 V60 H44 V44 H38 V26 L52 16 Z" fill="#e8c84a" />
      <path d="M54 9 H62 V15 H54Z" fill="#7fadd9" />
      <path d="M50 38 H66 M50 48 H66 M58 30 V56 M46 66 H70 M58 60 V100" stroke="#7fadd9" strokeWidth="3" fill="none" />
      <path id="wmarc" d="M8 62 A50 50 0 0 0 50 106" fill="none" />
      <text fontFamily={FS} fontSize="9.5" fontWeight="bold" fill="#fff"><textPath href="#wmarc">www.9m8.cn</textPath></text>
    </svg>
    <div className="ml-[36px] text-[78px] leading-none font-bold text-white whitespace-nowrap tracking-[-7px] font-['DejaVu_Serif',serif]">www.9m8.cn</div>
  </div>
);

export default function App() {
  return (
    <div className={`relative w-[2160px] h-[1395px] bg-black overflow-hidden flex flex-col ${SANS}`}>
      <TitleBar />
      <div className="flex h-[1323px]">
        <Left />
        <Right />
        <Rail />
      </div>
      <StatusBar />
      <Watermark />
    </div>
  );
}
